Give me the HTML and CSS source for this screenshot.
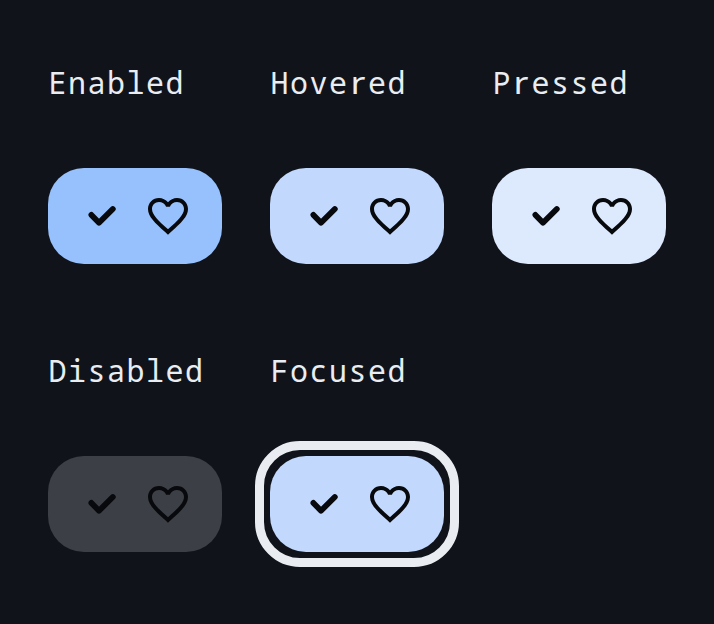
FILE: index.html
```html
<!DOCTYPE html>
<html lang="en">
<head>
<meta charset="utf-8">
<title>Icon chip states</title>
<link rel="stylesheet" href="styles.css">
</head>
<body>
<svg class="defs" aria-hidden="true">
<symbol id="check" viewBox="0 0 40 40"><path d="M11.4 18.9 19 26.7 32.8 13" fill="none" stroke="currentColor" stroke-width="5.8" stroke-linecap="round" stroke-linejoin="round"/></symbol>
<symbol id="heart" viewBox="0 0 24 24"><path fill="currentColor" d="M12.1 18.55l-.1.1-.11-.1C7.14 14.24 4 11.39 4 8.5 4 6.5 5.5 5 7.5 5c1.54 0 3.04 1 3.57 2.36h1.86C13.46 6 14.96 5 16.5 5c2 0 3.5 1.5 3.5 3.5 0 2.89-3.14 5.74-7.9 10.05M16.5 3c-1.74 0-3.41.81-4.5 2.08C10.91 3.81 9.24 3 7.5 3 4.42 3 2 5.41 2 8.5c0 3.77 3.4 6.86 8.55 11.53L12 21.35l1.45-1.32C18.6 15.36 22 12.27 22 8.5 22 5.41 19.58 3 16.5 3"/></symbol>
</svg>
<main class="states">
<section class="state"><h2 class="label">Enabled</h2><div class="chip enabled"><svg class="check"><use href="#check"/></svg><svg class="heart"><use href="#heart"/></svg></div></section>
<section class="state"><h2 class="label">Hove<span class="plain-r">r</span>ed</h2><div class="chip hovered"><svg class="check"><use href="#check"/></svg><svg class="heart"><use href="#heart"/></svg></div></section>
<section class="state"><h2 class="label">P<span class="plain-r">r</span>essed</h2><div class="chip pressed"><svg class="check"><use href="#check"/></svg><svg class="heart"><use href="#heart"/></svg></div></section>
<section class="state"><h2 class="label">Disabled</h2><div class="chip disabled"><svg class="check"><use href="#check"/></svg><svg class="heart"><use href="#heart"/></svg></div></section>
<section class="state"><h2 class="label">Focused</h2><div class="chip focused"><svg class="check"><use href="#check"/></svg><svg class="heart"><use href="#heart"/></svg></div></section>
</main>
</body>
</html>
```
FILE: styles.css
```css
* { box-sizing: border-box; }
body { margin: 0; background: #10131a; }
.defs { display: none; }
.states {
  display: grid;
  grid-template-columns: repeat(3, 174px);
  column-gap: 48px;
  row-gap: 72px;
  padding: 48px;
}
.state { height: 216px; }
.label {
  margin: 0 0 49px;
  padding-left: 0.5px;
  height: 71px;
  font: 400 30px/70px "Noto Mono", "Droid Sans Mono", "Noto Sans Mono", "DejaVu Sans Mono", monospace;
  letter-spacing: 1.5px;
  white-space: nowrap;
  color: #e9edf2;
}
/* Serifless r in a monospace cell */
.plain-r {
  display: inline-block;
  width: 19.5px;
  padding-left: 1.3px;
  font-family: "Noto Sans", sans-serif;
  transform: scaleX(1.2);
  transform-origin: left;
}
.chip {
  position: relative;
  display: flex;
  align-items: center;
  height: 96px;
  padding: 0 30px 0 32px;
  gap: 24px;
  border-radius: 36px;
  color: #07090d;
}
.check { width: 40px; height: 40px; }
.heart { width: 48px; height: 48px; }
.enabled { background: #96c1fc; }
.hovered, .focused { background: #c2d8fd; }
.pressed { background: #dde9fc; }
.disabled { background: #3c3f46; }
.focused::after {
  content: "";
  position: absolute;
  inset: -15px;
  border: 9px solid #e9edf2;
  border-radius: 45px;
}
```
